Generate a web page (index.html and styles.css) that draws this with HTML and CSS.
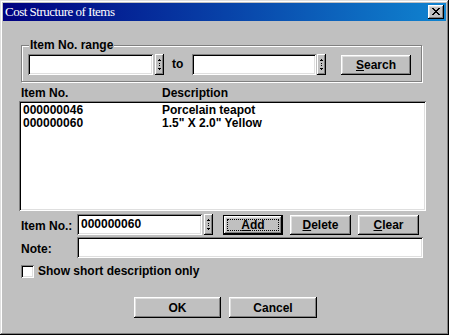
FILE: index.html
```html
<!DOCTYPE html>
<html>
 <head>
  <meta charset="UTF-8">
  <title>Cost Structure of Items</title>
  <link rel="stylesheet" href="styles.css">
 </head>
 <body>
  <div class="window">
   <div class="titlebar">
    <span class="title">Cost Structure of Items</span>
    <div class="close">
     <svg width="8" height="7" viewBox="0 0 8 7">
      <path d="M0 0h2v1h-2zM6 0h2v1h-2zM1 1h2v1h-2zM5 1h2v1h-2zM2 2h4v1h-4zM3 3h2v1h-2zM2 4h4v1h-4zM1 5h2v1h-2zM5 5h2v1h-2zM0 6h2v1h-2zM6 6h2v1h-2z" fill="#000"/>
     </svg>
    </div>
   </div>

   <!-- range search -->
   <div class="group">
    <span class="legend">Item No. range</span>
    <div class="range-row">
     <div class="field range-from"></div>
     <div class="spin"><svg width="9" height="21" viewBox="0 0 9 21"><use href="#spin"/></svg></div>
     <span class="to">to</span>
     <div class="field range-to"></div>
     <div class="spin spin-near"><svg width="9" height="21" viewBox="0 0 9 21"><use href="#spin"/></svg></div>
     <div class="btn btn-search"><u>S</u>earch</div>
    </div>
   </div>

   <div class="headers">
    <span class="col1">Item No.</span>
    <span>Description</span>
   </div>
   <div class="list">
    <div class="row"><span class="c1">000000046</span><span>Porcelain teapot</span></div>
    <div class="row"><span class="c1">000000060</span><span>1.5" X 2.0" Yellow</span></div>
   </div>

   <div class="line item-row">
    <span class="label">Item No.:</span>
    <div class="field item-field">000000060</div>
    <div class="spin"><svg width="9" height="21" viewBox="0 0 9 21"><use href="#spin"/></svg></div>
    <div class="btn btn-add"><span class="focus"><u>A</u>dd</span></div>
    <div class="btn btn-small"><u>D</u>elete</div>
    <div class="btn btn-small"><u>C</u>lear</div>
   </div>
   <div class="line note-row">
    <span class="label">Note:</span>
    <div class="field note-field"></div>
   </div>
   <div class="check-row">
    <span class="checkbox"></span>
    <span class="check-text">Show short description only</span>
   </div>

   <div class="actions">
    <div class="btn btn-ok">OK</div>
    <div class="btn btn-cancel">Cancel</div>
   </div>
  </div>

  <svg width="0" height="0" class="defs">
   <defs>
    <g id="spin">
     <rect width="9" height="21" fill="#c0c0c0"/>
     <rect x="0" y="0" width="8" height="1" fill="#fff"/>
     <rect x="0" y="0" width="1" height="20" fill="#fff"/>
     <rect x="8" y="0" width="1" height="21" fill="#000"/>
     <rect x="0" y="20" width="9" height="1" fill="#000"/>
     <rect x="7" y="1" width="1" height="19" fill="#808080"/>
     <rect x="1" y="19" width="7" height="1" fill="#808080"/>
     <rect x="4" y="5" width="1" height="1" fill="#000"/>
     <rect x="3" y="6" width="3" height="1" fill="#000"/>
     <rect x="4" y="9" width="1" height="1" fill="#000"/>
     <rect x="4" y="11" width="1" height="1" fill="#000"/>
     <rect x="3" y="14" width="3" height="1" fill="#000"/>
     <rect x="4" y="15" width="1" height="1" fill="#000"/>
    </g>
   </defs>
  </svg>
 </body>
</html>
```

FILE: styles.css
```css
body {
 margin: 0;
 font-family: "Liberation Sans", Arial, sans-serif;
 font-weight: bold;
 font-size: 12px;
 color: #000;
}
.defs {
 position: absolute;
}
.window {
 width: 449px;
 height: 335px;
 box-sizing: border-box;
 padding: 3px;
 background: #c0c0c0;
 box-shadow: inset -1px -1px 0 #000, inset 1px 1px 0 #dfdfdf,
             inset -2px -2px 0 #808080, inset 2px 2px 0 #fff;
}

/* title bar */
.titlebar {
 height: 18px;
 display: flex;
 align-items: center;
 justify-content: space-between;
 padding: 0 2px;
 background: linear-gradient(to right, #000080, #1084d0);
}
.title {
 color: #fff;
 font-family: "Liberation Serif", "Times New Roman", serif;
 font-weight: normal;
 font-size: 13px;
 letter-spacing: -0.5px;
}
.close {
 width: 16px;
 height: 14px;
 display: flex;
 align-items: center;
 justify-content: center;
 background: #c0c0c0;
 box-shadow: inset -1px -1px 0 #000, inset 1px 1px 0 #fff,
             inset -2px -2px 0 #808080, inset 2px 2px 0 #dfdfdf;
}
.close svg {
 display: block;
 margin: 0 1px 1px 0;
}

/* shared controls */
.field {
 height: 21px;
 box-sizing: border-box;
 background: #fff;
 padding-left: 4px;
 line-height: 21px;
 box-shadow: inset 1px 1px 0 #808080, inset -1px -1px 0 #fff,
             inset 2px 2px 0 #000, inset -2px -2px 0 #dfdfdf;
}
.spin {
 width: 9px;
 height: 21px;
 margin-left: 2px;
}
.spin svg {
 display: block;
}
.spin-near {
 margin-left: 1px;
}
.btn {
 box-sizing: border-box;
 display: flex;
 align-items: center;
 justify-content: center;
 background: #c0c0c0;
 box-shadow: inset -1px -1px 0 #000, inset 1px 1px 0 #fff,
             inset -2px -2px 0 #808080, inset 2px 2px 0 #dfdfdf;
}

/* group box */
.group {
 position: relative;
 margin: 24px 0 0 18px;
 width: 401px;
 height: 37px;
 box-sizing: border-box;
 border: 1px solid #808080;
 box-shadow: inset 1px 1px 0 #fff, 1px 1px 0 #fff;
 padding: 8px 0 0 6px;
}
.legend {
 position: absolute;
 top: -7px;
 left: 7px;
 padding: 0 1px;
 line-height: 13px;
 background: #c0c0c0;
}
.range-row {
 display: flex;
 align-items: flex-start;
}
.range-from {
 width: 125px;
}
.range-to {
 width: 124px;
}
.to {
 width: 20px;
 margin-left: 8px;
 line-height: 21px;
}
.btn-search {
 width: 70px;
 height: 20px;
 margin: 1px 0 0 15px;
}

/* list */
.headers {
 display: flex;
 margin: 5px 0 0 18px;
 line-height: 13px;
}
.col1 {
 width: 141px;
}
.list {
 width: 407px;
 height: 110px;
 box-sizing: border-box;
 margin: 1px 0 0 16px;
 padding: 3px 4px;
 background: #fff;
 box-shadow: inset 1px 1px 0 #808080, inset -1px -1px 0 #fff,
             inset 2px 2px 0 #000, inset -2px -2px 0 #dfdfdf;
}
.row {
 display: flex;
 line-height: 13px;
}
.c1 {
 width: 139px;
}

/* edit rows */
.line {
 display: flex;
 align-items: center;
 margin-left: 18px;
}
.label {
 width: 56px;
 padding-top: 2px;
}
.item-row {
 margin-top: 3px;
}
.item-field {
 width: 125px;
}
.btn-add {
 width: 60px;
 height: 20px;
 margin-left: 10px;
 border: 1px solid #000;
 padding: 3px;
}
.focus {
 flex: 1;
 align-self: stretch;
 display: flex;
 align-items: center;
 justify-content: center;
 border: 1px dotted #000;
}
.btn-small {
 width: 61px;
 height: 20px;
 margin-left: 7px;
}
.note-row {
 margin-top: 2px;
}
.note-field {
 width: 346px;
}
.check-row {
 display: flex;
 align-items: center;
 margin: 7px 0 0 18px;
}
.checkbox {
 width: 13px;
 height: 13px;
 background: #fff;
 box-shadow: inset 1px 1px 0 #808080, inset -1px -1px 0 #fff,
             inset 2px 2px 0 #000, inset -2px -2px 0 #dfdfdf;
}
.check-text {
 margin-left: 4px;
 line-height: 13px;
}

/* dialog buttons */
.actions {
 display: flex;
 margin-top: 19px;
 padding-left: 131px;
}
.btn-ok {
 width: 87px;
 height: 21px;
}
.btn-cancel {
 width: 88px;
 height: 21px;
 margin-left: 8px;
}
```
